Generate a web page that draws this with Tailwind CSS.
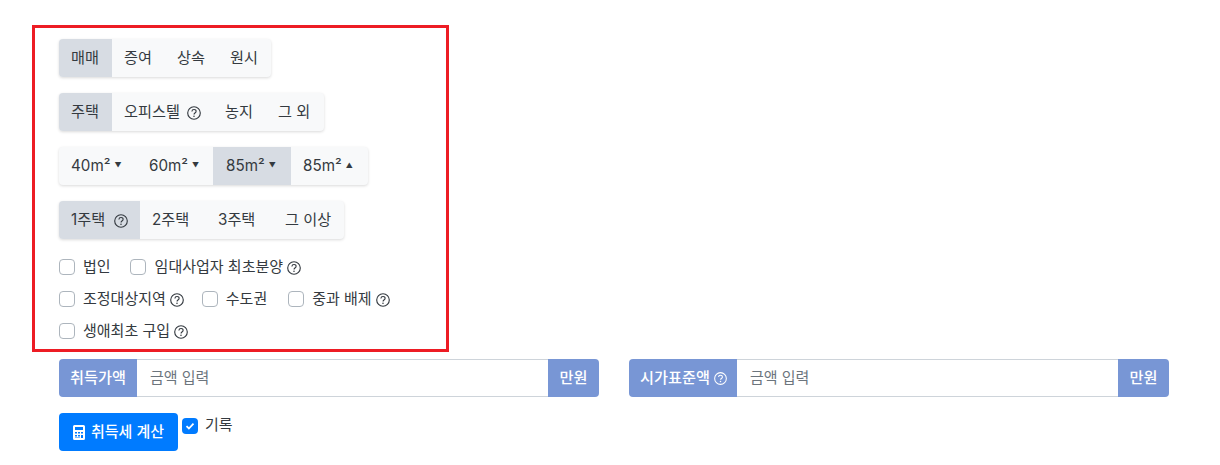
<!DOCTYPE html>
<html lang="ko">
<head>
<meta charset="utf-8">
<script src="https://cdn.jsdelivr.net/npm/@tailwindcss/browser@4"></script>
</head>
<body class="bg-white text-[#343a40] text-[15.2px] font-['Inter','Noto_Sans_CJK_KR',sans-serif]">
<svg class="hidden"><symbol id="q" viewBox="0 0 16 16"><circle cx="8" cy="8" r="7.2" fill="none" stroke="currentColor" stroke-width="1.3"/><path d="M5.6 6.2c.1-1.5 1.1-2.2 2.4-2.2 1.4 0 2.4.9 2.4 2 0 1-.6 1.5-1.3 2-.7.5-1 .8-1 1.6" fill="none" stroke="currentColor" stroke-width="1.3"/><circle cx="8" cy="11.7" r=".9" fill="currentColor"/></symbol></svg>
<div class="pl-[32px] pt-[25px]">
  <div class="w-[417px] h-[327px] border-[3px] border-[#ed1c24] pl-[24px] pt-[11px] flex flex-col items-start">
    <div class="flex h-[38px] rounded-[4px] bg-[#f8f9fa] shadow-[0_1px_3px_rgba(0,0,0,0.15)]">
      <div class="w-[53px] pl-[12px] flex items-center bg-[#d7dce3] rounded-l-[4px]">매매</div>
      <div class="w-[53px] pl-[12px] flex items-center">증여</div>
      <div class="w-[53px] pl-[12px] flex items-center">상속</div>
      <div class="w-[53px] pl-[12px] flex items-center">원시</div>
    </div>
    <div class="flex h-[38px] mt-4 rounded-[4px] bg-[#f8f9fa] shadow-[0_1px_3px_rgba(0,0,0,0.15)]">
      <div class="w-[53px] pl-[12px] flex items-center bg-[#d7dce3] rounded-l-[4px]">주택</div>
      <div class="w-[101px] pl-[12px] flex items-center">오피스텔<svg class="w-[14px] h-[14px] ml-[7px] mt-[1px]"><use href="#q"/></svg></div>
      <div class="w-[53px] pl-[12px] flex items-center">농지</div>
      <div class="w-[58px] pl-[12px] flex items-center">그 외</div>
    </div>
    <div class="flex h-[38px] mt-4 rounded-[4px] bg-[#f8f9fa] shadow-[0_1px_3px_rgba(0,0,0,0.15)]">
      <div class="w-[77px] pl-[12px] flex items-center">40m²<span class="text-[7px] ml-[4px]">▼</span></div>
      <div class="w-[77px] pl-[13px] flex items-center">60m²<span class="text-[7px] ml-[4px]">▼</span></div>
      <div class="w-[78px] pl-[13px] flex items-center bg-[#d7dce3]">85m²<span class="text-[7px] ml-[4px]">▼</span></div>
      <div class="w-[77px] pl-[12px] flex items-center">85m²<span class="text-[7px] ml-[4px]">▲</span></div>
    </div>
    <div class="flex h-[38px] mt-4 rounded-[4px] bg-[#f8f9fa] shadow-[0_1px_3px_rgba(0,0,0,0.15)]">
      <div class="w-[81px] pl-[12px] flex items-center bg-[#d7dce3] rounded-l-[4px]">1주택<svg class="w-[14px] h-[14px] ml-[9px] mt-[1px]"><use href="#q"/></svg></div>
      <div class="w-[66px] pl-[12px] flex items-center">2주택</div>
      <div class="w-[67px] pl-[12px] flex items-center">3주택</div>
      <div class="w-[71px] pl-[12px] flex items-center">그 이상</div>
    </div>
    <div class="flex items-center h-[32px] mt-[12px] text-[15px]">
      <span class="w-4 h-4 border border-[#adb5bd] rounded-[4px] bg-white"></span><span class="ml-[8px]">법인</span>
      <span class="w-4 h-4 border border-[#adb5bd] rounded-[4px] bg-white ml-[19px]"></span><span class="ml-[9px]">임대사업자 최초분양</span><svg class="w-[14px] h-[14px] ml-[4px] mt-[1px]"><use href="#q"/></svg>
    </div>
    <div class="flex items-center h-[32px] text-[15px]">
      <span class="w-4 h-4 border border-[#adb5bd] rounded-[4px] bg-white"></span><span class="ml-[8px]">조정대상지역</span><svg class="w-[14px] h-[14px] ml-[4px] mt-[1px]"><use href="#q"/></svg>
      <span class="w-4 h-4 border border-[#adb5bd] rounded-[4px] bg-white ml-[18px]"></span><span class="ml-[8px]">수도권</span>
      <span class="w-4 h-4 border border-[#adb5bd] rounded-[4px] bg-white ml-[21px]"></span><span class="ml-[8px]">중과 배제</span><svg class="w-[14px] h-[14px] ml-[4px] mt-[1px]"><use href="#q"/></svg>
    </div>
    <div class="flex items-center h-[32px] text-[15px]">
      <span class="w-4 h-4 border border-[#adb5bd] rounded-[4px] bg-white"></span><span class="ml-[8px]">생애최초 구입</span><svg class="w-[14px] h-[14px] ml-[4px] mt-[1px]"><use href="#q"/></svg>
    </div>
  </div>
</div>
<div class="flex gap-[30px] pl-[59px] mt-[7px]">
  <div class="flex w-[540px] h-[38px]">
    <div class="w-[78px] flex items-center justify-center bg-[#7896d5] text-white font-medium rounded-l-[4px]">취득가액</div>
    <div class="flex-1 flex items-center px-[13px] border-y border-[#ced4da] text-[#6c757d] text-[15px]">금액 입력</div>
    <div class="w-[51px] flex items-center justify-center bg-[#7896d5] text-white font-medium rounded-r-[4px]">만원</div>
  </div>
  <div class="flex w-[540px] h-[38px]">
    <div class="w-[108px] pl-[11px] flex items-center bg-[#7896d5] text-white font-medium rounded-l-[4px]">시가표준액<svg class="w-[13px] h-[13px] ml-[4px]"><use href="#q"/></svg></div>
    <div class="flex-1 flex items-center px-[13px] border-y border-[#ced4da] text-[#6c757d] text-[15px]">금액 입력</div>
    <div class="w-[51px] flex items-center justify-center bg-[#7896d5] text-white font-medium rounded-r-[4px]">만원</div>
  </div>
</div>
<div class="flex items-start pl-[59px] mt-[16px]">
  <div class="w-[119px] h-[38px] flex items-center justify-center bg-[#007bff] text-white rounded-[4px] text-[15px] font-medium">
    <svg class="w-[12px] h-[15px] mr-[6px]" viewBox="0 0 12 15"><path fill="currentColor" fill-rule="evenodd" d="M1.5 0h9A1.5 1.5 0 0 1 12 1.5v12a1.5 1.5 0 0 1-1.5 1.5h-9A1.5 1.5 0 0 1 0 13.5v-12A1.5 1.5 0 0 1 1.5 0zM2 2v3h8V2zM2 7v1.5h2V7zm3 0v1.5h2V7zm3 0v1.5h2V7zM2 10v1.5h2V10zm3 0v1.5h2V10zm3 0v3h2v-3zM2 12.5V13h5v-.5z"/></svg>
    취득세 계산
  </div>
  <span class="w-4 h-4 bg-[#007bff] rounded-[4px] ml-[4px] mt-[5px] flex items-center justify-center">
    <svg class="w-[10px] h-[10px]" viewBox="0 0 10 10"><path d="M1.5 5.2l2.4 2.3 4.6-4.8" fill="none" stroke="white" stroke-width="1.8"/></svg>
  </span>
  <span class="ml-[7px] mt-[1px] text-[15px]">기록</span>
</div>
</body>
</html>
